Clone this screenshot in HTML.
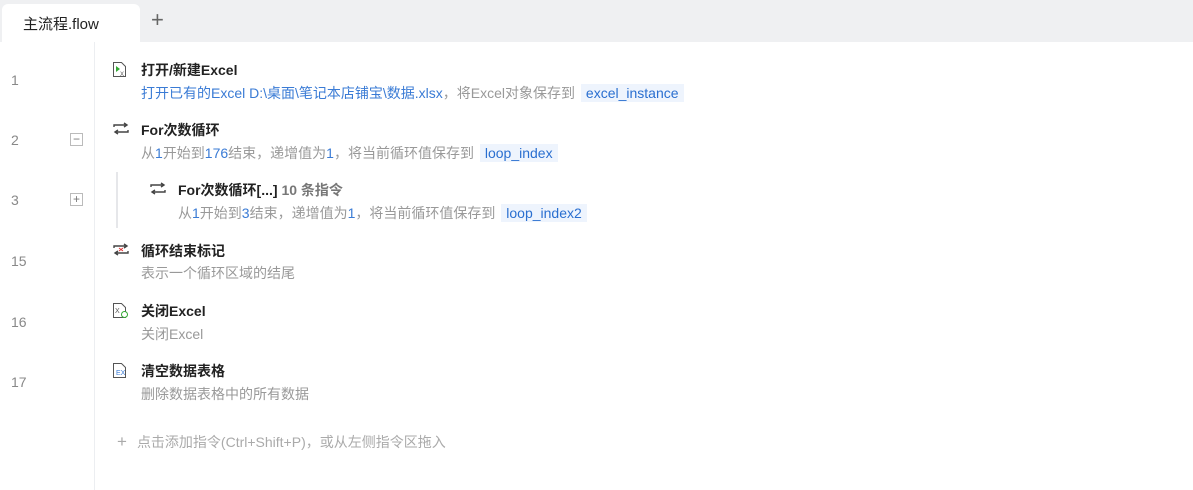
<!DOCTYPE html>
<html><head><meta charset="utf-8"><style>
*{margin:0;padding:0;box-sizing:border-box}
body{width:1193px;height:490px;overflow:hidden;background:#fff;font-family:"Liberation Sans","Noto Sans CJK SC",sans-serif;position:relative}
.tabbar{position:absolute;left:0;top:0;width:1193px;height:42px;background:#eff0f2}
.tab{position:absolute;left:2px;top:4px;width:138px;height:38px;background:#fff;border-radius:6px 6px 0 0;font-size:15px;color:#222;padding:9px 0 0 21px}
.plus{position:absolute;left:151px;top:7px;font-size:22px;color:#666;font-weight:300}
.gutter{position:absolute;left:0;top:42px;width:95px;height:448px;border-right:1px solid #eceef1;background:#fff}
.ln{position:absolute;left:11px;font-size:14px;color:#888}
.box{position:absolute;left:70px;width:13px;height:13px;border:1px solid #bbb;font-size:12px;line-height:10px;text-align:center;color:#777}
.t{position:absolute;font-size:14px;font-weight:bold;color:#222}
.d{position:absolute;font-size:14px;color:#999;white-space:nowrap}
.b{color:#3a7bd5}
.v{background:#eef4fd;color:#2a6fd0;padding:1px 5px;margin-left:2px;font-size:14px}
.ic{position:absolute}
.vline{position:absolute;left:116px;top:172px;width:2px;height:56px;background:#e6e7ea}
</style></head><body>
<div class="tabbar"><div class="tab">主流程.flow</div><div class="plus">+</div></div>
<div class="gutter"></div>
<div class="ln" style="top:72px">1</div>
<div class="ln" style="top:132px">2</div>
<div class="ln" style="top:192px">3</div>
<div class="ln" style="top:253px">15</div>
<div class="ln" style="top:314px">16</div>
<div class="ln" style="top:374px">17</div>
<div class="box" style="top:133px">−</div>
<div class="box" style="top:193px">+</div>

<svg class="ic" style="left:112px;top:61px" width="16" height="17" viewBox="0 0 16 17"><path d="M1.5 1.5h8l4 4v10h-12z" fill="none" stroke="#555"/><path d="M4 5v6l4-3z" fill="#3a3"/><text x="8" y="15" font-size="6" fill="#555">X</text></svg>
<div class="t" style="left:141px;top:60px">打开/新建Excel</div>
<div class="d" style="left:141px;top:83px"><span class="b">打开已有的Excel D:\桌面\笔记本店铺宝\数据.xlsx</span>，将Excel对象保存到 <span class="v">excel_instance</span></div>

<svg class="ic" style="left:112px;top:122px" width="18" height="13" viewBox="0 0 18 13"><path d="M2 5V3h13M12 1l3 2-3 2M16 8v2H3M6 12l-3-2 3-2" fill="none" stroke="#444" stroke-width="1.4"/></svg>
<div class="t" style="left:141px;top:120px">For次数循环</div>
<div class="d" style="left:141px;top:143px">从<span class="b">1</span>开始到<span class="b">176</span>结束，递增值为<span class="b">1</span>，将当前循环值保存到 <span class="v">loop_index</span></div>

<div class="vline"></div>
<svg class="ic" style="left:149px;top:182px" width="18" height="13" viewBox="0 0 18 13"><path d="M2 5V3h13M12 1l3 2-3 2M16 8v2H3M6 12l-3-2 3-2" fill="none" stroke="#444" stroke-width="1.4"/></svg>
<div class="t" style="left:178px;top:180px">For次数循环[...] <span style="color:#777">10 条指令</span></div>
<div class="d" style="left:178px;top:203px">从<span class="b">1</span>开始到<span class="b">3</span>结束，递增值为<span class="b">1</span>，将当前循环值保存到 <span class="v">loop_index2</span></div>

<svg class="ic" style="left:112px;top:243px" width="18" height="13" viewBox="0 0 18 13"><path d="M2 5V3h13M12 1l3 2-3 2M16 8v2H3M6 12l-3-2 3-2" fill="none" stroke="#444" stroke-width="1.4"/><path d="M7 5l4 3M11 5l-4 3" stroke="#d33"/></svg>
<div class="t" style="left:141px;top:241px">循环结束标记</div>
<div class="d" style="left:141px;top:263px">表示一个循环区域的结尾</div>

<svg class="ic" style="left:112px;top:302px" width="17" height="17" viewBox="0 0 17 17"><path d="M1.5 1.5h8l4 4v10h-12z" fill="none" stroke="#555"/><text x="3" y="11" font-size="7" fill="#555">X</text><circle cx="12.5" cy="12.5" r="3" fill="#fff" stroke="#3a3"/></svg>
<div class="t" style="left:141px;top:301px">关闭Excel</div>
<div class="d" style="left:141px;top:324px">关闭Excel</div>

<svg class="ic" style="left:112px;top:362px" width="16" height="17" viewBox="0 0 16 17"><path d="M1.5 1.5h8l4 4v10h-12z" fill="none" stroke="#555"/><text x="4" y="13" font-size="7" fill="#3a7bd5">EX</text></svg>
<div class="t" style="left:141px;top:361px">清空数据表格</div>
<div class="d" style="left:141px;top:384px">删除数据表格中的所有数据</div>

<div class="d" style="left:117px;top:432px;color:#aaa"><span style="font-size:17px;margin-right:10px">+</span>点击添加指令(Ctrl+Shift+P)，或从左侧指令区拖入</div>
</body></html>
